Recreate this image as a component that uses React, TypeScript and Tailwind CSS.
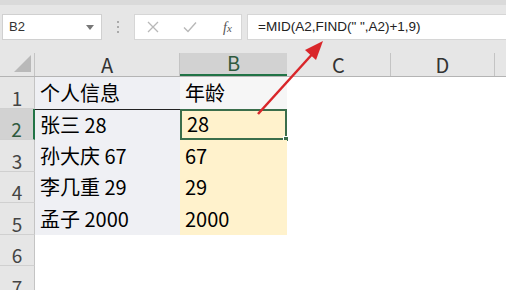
import React from "react";

const cols = [
  { name: "A", w: "w-[145px]" },
  { name: "B", w: "w-[107px]" },
  { name: "C", w: "w-[104px]" },
  { name: "D", w: "w-[104px]" },
];

const rows = [
  { a: "个人信息", b: "年龄" },
  { a: "张三 28", b: "28" },
  { a: "孙大庆 67", b: "67" },
  { a: "李几重 29", b: "29" },
  { a: "孟子 2000", b: "2000" },
  { a: "", b: "" },
  { a: "", b: "" },
];

const font = { fontFamily: '"Noto Sans CJK SC", "Noto Sans", sans-serif' };

const App = () => {
  return (
    <div className="relative w-[506px] h-[290px] overflow-hidden bg-white" style={font}>
      {/* formula bar */}
      <div className="h-[53px] bg-[#e6e6e6] border-t-[5px] border-[#dadada] flex items-start pt-[9px]">
        <div className="ml-[2px] w-[100px] h-[26px] bg-white border border-[#d0d0d0] flex items-center justify-between px-[6px]">
          <span className="text-[13px] text-[#333]" style={{ fontFamily: '"Liberation Sans", sans-serif' }}>
            B2
          </span>
          <span className="w-0 h-0 border-l-[4px] border-r-[4px] border-t-[5px] border-l-transparent border-r-transparent border-t-[#777] mr-[1px]" />
        </div>
        <div className="w-[32px] h-[26px] flex flex-col items-center justify-center gap-[3px]">
          <span className="w-[2px] h-[2px] bg-[#aaa]" />
          <span className="w-[2px] h-[2px] bg-[#aaa]" />
          <span className="w-[2px] h-[2px] bg-[#aaa]" />
        </div>
        <div className="w-[108px] h-[26px] bg-white border border-[#d6d6d6] flex items-center">
          <svg width="12" height="12" viewBox="0 0 12 12" className="ml-[12px]">
            <path d="M1 1 L11 11 M11 1 L1 11" stroke="#b8b8b8" strokeWidth="1.3" />
          </svg>
          <svg width="14" height="12" viewBox="0 0 14 12" className="ml-[24px]">
            <path d="M1 6.5 L5 10.5 L13 1.5" stroke="#b8b8b8" strokeWidth="1.4" fill="none" />
          </svg>
          <span
            className="ml-[26px] text-[14px] italic text-[#555]"
            style={{ fontFamily: '"Liberation Serif", serif' }}
          >
            f<span className="text-[11px]">x</span>
          </span>
        </div>
        <div className="ml-[5px] flex-1 h-[26px] bg-white border-l border-y border-[#d6d6d6] flex items-center pl-[10px]">
          <span className="text-[13.5px] text-[#222]" style={{ fontFamily: '"Liberation Sans", sans-serif' }}>
            =MID(A2,FIND(&quot; &quot;,A2)+1,9)
          </span>
        </div>
      </div>

      {/* column headers */}
      <div className="flex h-[24px] bg-[#e6e6e6] border-b border-[#b4b4b4]">
        <div className="w-[35px] h-full relative border-r border-[#c4c4c4]">
          <span className="absolute right-[3px] bottom-[4px] w-0 h-0 border-l-[17px] border-t-[17px] border-l-transparent border-t-transparent border-b-0 border-r-0" style={{ borderBottom: "17px solid #b9b9b9", borderLeft: "17px solid transparent", borderTop: 0 }} />
        </div>
        {cols.map((c) => (
          <div
            key={c.name}
            className={`${c.w} h-full flex items-end justify-center leading-none pb-[1px] text-[20px] ${
              c.name === "B"
                ? "bg-[#d2d2d2] border-b-2 border-[#217346] text-[#2f5a3e]"
                : "border-r border-[#c4c4c4] text-[#333]"
            }`}
          >
            {c.name}
          </div>
        ))}
        <div className="flex-1" />
      </div>

      {/* body */}
      {rows.map((r, i) => {
        const n = i + 1;
        const sel = n === 2;
        return (
          <div key={n} className="flex h-[31.5px]">
            <div
              className={`w-[35px] h-full flex items-end justify-center pb-[1px] leading-none text-[19px] border-b border-[#d0d0d0] ${
                sel
                  ? "bg-[#d2d2d2] border-r-2 border-r-[#217346] text-[#2f5a3e]"
                  : "bg-[#e6e6e6] border-r border-r-[#c4c4c4] text-[#444]"
              }`}
            >
              {n}
            </div>
            <div
              className={`w-[145px] h-full flex items-center pl-[5px] text-[20px] text-black ${
                n <= 5 ? "bg-[#eff0f4]" : ""
              } ${sel ? "border-t border-[#222]" : ""}`}
            >
              {r.a}
            </div>
            <div
              className={`relative w-[107px] h-full flex items-center pl-[5px] text-[20px] text-black ${
                n === 1 ? "bg-[#f6f6f6]" : n <= 5 ? "bg-[#fff2cc]" : ""
              } ${sel ? "border-2 border-[#3b6e4b] pl-[3px]" : ""}`}
            >
              {r.b}
              {sel && <span className="absolute right-[-4px] bottom-[-4px] w-[6px] h-[6px] bg-[#3b6e4b] border border-white" />}
            </div>
            <div className="flex-1" />
          </div>
        );
      })}

      {/* red arrow */}
      <svg className="absolute left-0 top-0 pointer-events-none" width="506" height="290">
        <line x1="258" y1="114" x2="316" y2="50" stroke="#d9262a" strokeWidth="2.5" />
        <polygon points="323,41 305,50 316,60" fill="#d9262a" />
      </svg>
    </div>
  );
};

export default App;
